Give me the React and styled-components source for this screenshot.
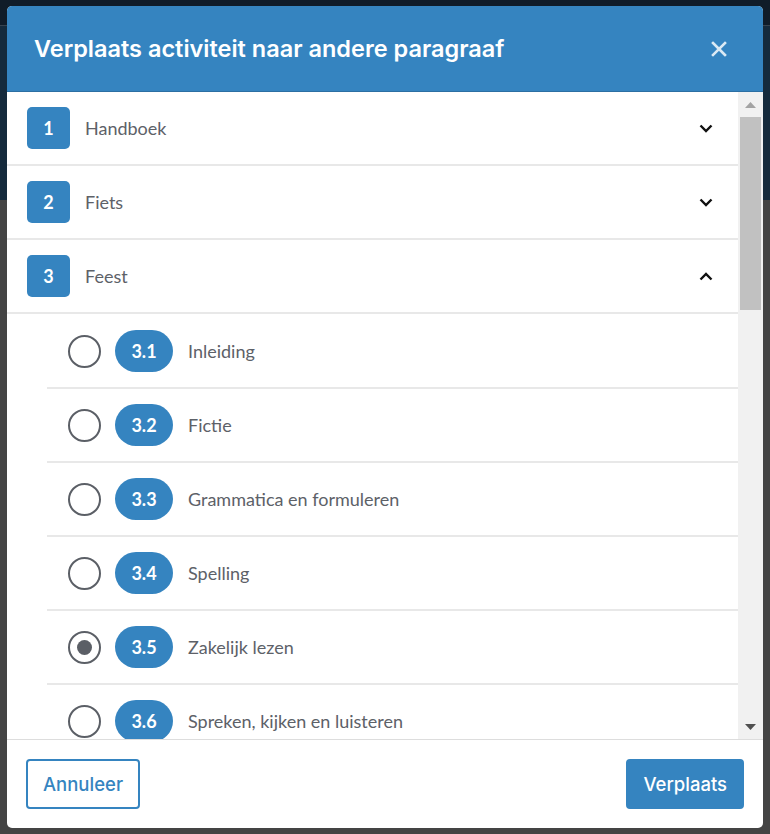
import React from "react";
import styled, { createGlobalStyle } from "styled-components";

const Global = createGlobalStyle`
  html, body { margin: 0; padding: 0; }
  body {
    background: #434343;
    font-family: Lato, "Noto Sans", sans-serif;
    overflow: hidden;
  }
  * { box-sizing: border-box; }
`;

const BLUE = "#3584c0";

const Backdrop = styled.div`
  height: 834px;
  display: flex;
  flex-direction: column;
`;

const BackdropBar = styled.div`
  height: 26px;
  background: #101c29;
  border-bottom: 1px solid #37434f;
`;

const BackdropHero = styled.div`
  height: 174px;
  background: #152a3c;
`;

const BackdropRest = styled.div`
  flex: 1;
  background: #444444;
`;

const Modal = styled.div`
  position: absolute;
  left: 7px;
  top: 6px;
  width: 756px;
  height: 822px;
  background: #ffffff;
  border-radius: 5px;
  overflow: hidden;
  display: flex;
  flex-direction: column;
`;

const Header = styled.header`
  height: 86px;
  flex: none;
  background: ${BLUE};
  border-bottom: 1px solid #2c6fa3;
  display: flex;
  align-items: center;
  justify-content: space-between;
  padding: 0 34px 0 27px;
`;

const Title = styled.h2`
  margin: 0;
  color: #ffffff;
  font-family: Inter, "Noto Sans", sans-serif;
  font-weight: 600;
  font-size: 23.5px;
`;

const CloseButton = styled.button`
  width: 20px;
  height: 20px;
  padding: 0;
  border: 0;
  background: none;
  display: flex;
  align-items: center;
  justify-content: center;
`;

const Body = styled.div`
  flex: 1;
  min-height: 0;
  display: flex;
`;

const List = styled.div`
  flex: 1;
  overflow: hidden;
`;

const ChapterRow = styled.div`
  height: 74px;
  display: flex;
  align-items: center;
  padding: 0 25px 0 20px;
  border-bottom: 2px solid #e8e8e8;
`;

const Badge = styled.span`
  width: 43px;
  height: 42px;
  flex: none;
  border-radius: 5px;
  background: ${BLUE};
  color: #fff;
  font-weight: 700;
  font-size: 18px;
  display: flex;
  align-items: center;
  justify-content: center;
`;

const Label = styled.span`
  flex: 1;
  margin-left: 15px;
  font-size: 18px;
  color: #5d6168;
`;

const SubList = styled.div`
  margin-left: 40px;
  padding-top: 1px;
`;

const SubRow = styled.label`
  height: 74px;
  display: flex;
  align-items: center;
  padding-left: 21px;
  border-bottom: 2px solid #e8e8e8;
`;

const Radio = styled.span`
  width: 33px;
  height: 33px;
  flex: none;
  border-radius: 50%;
  border: 2px solid #5b5f66;
  display: flex;
  align-items: center;
  justify-content: center;
  &::after {
    content: "";
    width: 15px;
    height: 15px;
    border-radius: 50%;
    background: #5b5f66;
    display: ${(p) => (p.$checked ? "block" : "none")};
  }
`;

const Pill = styled.span`
  margin-left: 14px;
  width: 58px;
  height: 42px;
  flex: none;
  border-radius: 21px;
  background: ${BLUE};
  color: #fff;
  font-weight: 700;
  font-size: 18px;
  display: flex;
  align-items: center;
  justify-content: center;
`;

const Scrollbar = styled.div`
  width: 25px;
  flex: none;
  background: #f1f1f1;
  display: flex;
  flex-direction: column;
  align-items: center;
`;

const ScrollButton = styled.div`
  height: 25px;
  width: 100%;
  flex: none;
  display: flex;
  align-items: center;
  justify-content: center;
`;

const Track = styled.div`
  flex: 1;
  width: 100%;
  padding: 0 2px;
`;

const Thumb = styled.div`
  width: 100%;
  background: #c1c1c1;
`;

const Footer = styled.footer`
  height: 89px;
  flex: none;
  border-top: 1px solid #dddddd;
  display: flex;
  align-items: center;
  justify-content: space-between;
  padding: 0 19px;
`;

const Button = styled.button`
  height: 50px;
  padding: 0 15px;
  border-radius: 4px;
  font-family: Inter, "Noto Sans", sans-serif;
  font-weight: 500;
  font-size: 18.5px;
  border: 2px solid ${BLUE};
  background: ${(p) => (p.$primary ? BLUE : "#fff")};
  color: ${(p) => (p.$primary ? "#fff" : BLUE)};
`;

const Chevron = ({ up }) => (
  <svg width="14" height="9" viewBox="0 0 14 9">
    <path
      d={up ? "M1.5 7.5 L7 2 L12.5 7.5" : "M1.5 1.5 L7 7 L12.5 1.5"}
      fill="none"
      stroke="#111"
      strokeWidth="2.4"
    />
  </svg>
);

const chapters = [
  { n: "1", title: "Handboek" },
  { n: "2", title: "Fiets" },
  { n: "3", title: "Feest", open: true },
];

const sections = [
  { n: "3.1", title: "Inleiding" },
  { n: "3.2", title: "Fictie" },
  { n: "3.3", title: "Grammatica en formuleren" },
  { n: "3.4", title: "Spelling" },
  { n: "3.5", title: "Zakelijk lezen", checked: true },
  { n: "3.6", title: "Spreken, kijken en luisteren" },
];

export default function App() {
  return (
    <>
      <Global />
      <Backdrop>
        <BackdropBar />
        <BackdropHero />
        <BackdropRest />
      </Backdrop>
      <Modal>
        <Header>
          <Title>Verplaats activiteit naar andere paragraaf</Title>
          <CloseButton aria-label="Sluiten">
            <svg width="16" height="16" viewBox="0 0 16 16">
              <path
                d="M2 2 L14 14 M14 2 L2 14"
                stroke="rgba(255,255,255,0.82)"
                strokeWidth="2.6"
                strokeLinecap="square"
              />
            </svg>
          </CloseButton>
        </Header>
        <Body>
          <List>
            {chapters.map((c) => (
              <React.Fragment key={c.n}>
                <ChapterRow>
                  <Badge>{c.n}</Badge>
                  <Label>{c.title}</Label>
                  <Chevron up={c.open} />
                </ChapterRow>
                {c.open && (
                  <SubList>
                    {sections.map((s) => (
                      <SubRow key={s.n}>
                        <Radio $checked={s.checked} />
                        <Pill>{s.n}</Pill>
                        <Label>{s.title}</Label>
                      </SubRow>
                    ))}
                  </SubList>
                )}
              </React.Fragment>
            ))}
          </List>
          <Scrollbar>
            <ScrollButton>
              <svg width="11" height="6" viewBox="0 0 11 6">
                <path d="M0 6 L5.5 0 L11 6 Z" fill="#a3a3a3" />
              </svg>
            </ScrollButton>
            <Track>
              <Thumb style={{ height: 193 }} />
            </Track>
            <ScrollButton>
              <svg width="11" height="6" viewBox="0 0 11 6">
                <path d="M0 0 L5.5 6 L11 0 Z" fill="#505050" />
              </svg>
            </ScrollButton>
          </Scrollbar>
        </Body>
        <Footer>
          <Button>Annuleer</Button>
          <Button $primary>Verplaats</Button>
        </Footer>
      </Modal>
    </>
  );
}
